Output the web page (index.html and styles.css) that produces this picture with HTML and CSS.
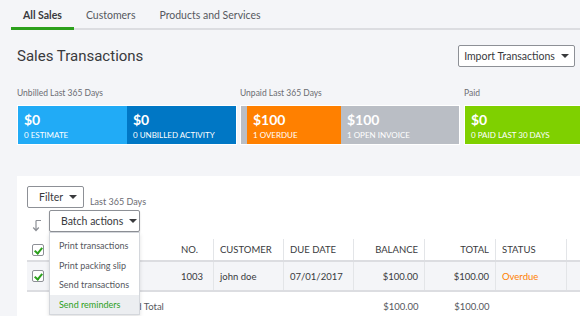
FILE: index.html
```html
<!DOCTYPE html>
<html lang="en">
<head>
    <meta charset="UTF-8">
    <title>Sales Transactions</title>
    <link rel="stylesheet" href="styles.css">
</head>
<body>
    <nav class="tabs">
        <a class="tab active">All Sales</a>
        <a class="tab">Customers</a>
        <a class="tab">Products and Services</a>
    </nav>

    <div class="page-head">
        <h1 class="page-title">Sales Transactions</h1>
        <button class="btn">Import Transactions <span class="caret"></span></button>
    </div>

    <div class="summary">
        <div class="group group-unbilled">
            <div class="group-label">Unbilled Last 365 Days</div>
            <div class="bars">
                <div class="bar bar-estimate"><b>$0</b><span>0 ESTIMATE</span></div>
                <div class="bar bar-unbilled"><b>$0</b><span>0 UNBILLED ACTIVITY</span></div>
            </div>
        </div>
        <div class="group group-unpaid">
            <div class="group-label">Unpaid Last 365 Days</div>
            <div class="bars">
                <div class="bar bar-stub"></div>
                <div class="bar bar-overdue"><b>$100</b><span>1 OVERDUE</span></div>
                <div class="bar bar-open"><b>$100</b><span>1 OPEN INVOICE</span></div>
            </div>
        </div>
        <div class="group group-paid">
            <div class="group-label">Paid</div>
            <div class="bars">
                <div class="bar bar-paid"><b>$0</b><span>0 PAID LAST 30 DAYS</span></div>
            </div>
        </div>
    </div>

    <div class="panel">
        <div class="filter-row">
            <button class="btn btn-small">Filter <span class="caret"></span></button>
            <span class="filter-note">Last 365 Days</span>
        </div>
        <div class="batch-row">
            <svg class="sort-icon" width="10" height="13" viewBox="0 0 10 13">
                <path d="M4 1.5 H9 M4 1.5 V11.5 M1.2 8.5 L4 11.5 L6.8 8.5" fill="none" stroke="#8d9096" stroke-width="1.2"/>
            </svg>
            <div class="batch">
                <button class="btn btn-batch">Batch actions <span class="caret"></span></button>
                <ul class="menu">
                    <li>Print transactions</li>
                    <li>Print packing slip</li>
                    <li>Send transactions</li>
                    <li class="hover">Send reminders</li>
                </ul>
            </div>
        </div>

        <table class="grid">
            <thead>
                <tr>
                    <th class="c-check"><span class="check"></span></th>
                    <th class="c-no">NO.</th>
                    <th class="c-cust">CUSTOMER</th>
                    <th class="c-date">DUE DATE</th>
                    <th class="c-num">BALANCE</th>
                    <th class="c-num">TOTAL</th>
                    <th class="c-status">STATUS</th>
                    <th class="c-more"></th>
                </tr>
            </thead>
            <tbody>
                <tr class="row">
                    <td class="c-check"><span class="check"></span></td>
                    <td>1003</td>
                    <td>john doe</td>
                    <td>07/01/2017</td>
                    <td class="c-num">$100.00</td>
                    <td class="c-num">$100.00</td>
                    <td class="overdue">Overdue</td>
                    <td></td>
                </tr>
                <tr class="total">
                    <td class="c-check total-label">Grand Total</td>
                    <td></td>
                    <td></td>
                    <td></td>
                    <td class="c-num">$100.00</td>
                    <td class="c-num">$100.00</td>
                    <td></td>
                    <td></td>
                </tr>
            </tbody>
        </table>
    </div>
</body>
</html>
```

FILE: styles.css
```css
body {
    margin: 0;
    width: 580px;
    height: 316px;
    overflow: hidden;
    background: #f4f5f8;
    font-family: Lato, "Noto Sans", sans-serif;
    color: #393a3d;
}
.tabs {
    display: flex;
    margin-left: 11px;
    height: 28px;
    border-bottom: 2px solid #dcdde1;
}
.tab {
    padding: 9px 12px 0 12px;
    font-size: 10.5px;
    color: #56585e;
}
.tab.active {
    color: #393a3d;
    font-weight: bold;
    border-bottom: 3px solid #2ca01c;
    margin-bottom: -2px;
}
.page-head {
    display: flex;
    justify-content: space-between;
    align-items: center;
    padding: 15px 5px 0 17px;
}
.page-title {
    margin: 0;
    font-size: 15px;
    font-weight: normal;
    font-family: Roboto, sans-serif;
}
.btn {
    font-family: inherit;
    font-size: 10.5px;
    color: #393a3d;
    background: #fff;
    border: 1px solid #8d9096;
    border-radius: 2px;
    height: 22px;
    padding: 0 12px;
    display: flex;
    align-items: center;
    gap: 6px;
    white-space: nowrap;
    box-sizing: border-box;
}
.page-head .btn {
    width: 117px;
    justify-content: center;
}
.caret {
    width: 0;
    height: 0;
    border-left: 4px solid transparent;
    border-right: 4px solid transparent;
    border-top: 4px solid #393a3d;
}
.summary {
    display: flex;
    margin: 21px 0 0 17px;
}
.group-label {
    font-size: 8.5px;
    color: #6b6c72;
    height: 17px;
}
.group-unbilled { width: 220px; margin-right: 3px; }
.group-unpaid { width: 220px; margin-right: 4px; }
.group-paid { flex: 1; }
.bars {
    display: flex;
    height: 38px;
    border: 1px solid #fff;
    border-right: none;
}
.bar {
    display: flex;
    flex-direction: column;
    padding: 6px 0 0 6px;
    color: #fff;
    box-sizing: border-box;
}
.bar b {
    font-size: 14px;
    line-height: 16px;
}
.bar span {
    font-size: 8px;
    margin-top: 2px;
}
.bar-estimate { width: 110px; background: #21abf6; }
.bar-unbilled { width: 110px; background: #0077c5; }
.bar-stub { width: 6px; padding: 0; background: #babec5; }
.bar-overdue { width: 94px; background: #ff8000; }
.bar-open { flex: 1; background: #babec5; }
.bar-paid { flex: 1; background: #7fd000; }
.group-unbilled .bars,
.group-unpaid .bars { border-right: 1px solid #fff; }

.panel {
    margin: 31px 0 0 17px;
    background: #fff;
    padding: 10px 0 0 10px;
    height: 200px;
}
.filter-row {
    display: flex;
    align-items: flex-end;
    gap: 6px;
}
.btn-small {
    width: 57px;
    padding: 0 11px;
}
.filter-note {
    font-size: 9px;
    color: #6b6c72;
    margin-bottom: 1px;
}
.batch-row {
    display: flex;
    align-items: center;
    margin-top: 2px;
    gap: 7px;
    padding-left: 5px;
}
.sort-icon {
    margin-top: 8px;
}
.batch {
    position: relative;
}
.btn-batch {
    width: 91px;
    padding: 0 11px;
    box-shadow: 0 1px 2px rgba(0,0,0,0.15);
}
.menu {
    position: absolute;
    top: 22px;
    left: 0;
    width: 91px;
    margin: 0;
    padding: 3px 0 0;
    list-style: none;
    background: #fff;
    border: 1px solid #d4d7dc;
    box-shadow: 0 2px 4px rgba(0,0,0,0.12);
    z-index: 2;
    box-sizing: border-box;
}
.menu li {
    font-size: 9px;
    color: #56585e;
    height: 19.5px;
    line-height: 19.5px;
    padding-left: 9px;
}
.menu li.hover {
    background: #eceef1;
    color: #2ca01c;
}
.grid {
    border-collapse: collapse;
    table-layout: fixed;
    width: 580px;
    margin-top: 7px;
    font-size: 9.5px;
}
.grid th,
.grid td {
    text-align: left;
    padding: 0 6px;
    border-right: 1px solid #e3e5e8;
    white-space: nowrap;
    overflow: hidden;
}
.grid th {
    height: 21px;
    font-weight: normal;
    border-bottom: 2px solid #dcdde1;
}
.grid .row td {
    height: 28px;
    background: #f4f5f8;
    border-bottom: 2px solid #dcdde1;
}
.grid .total td {
    height: 28px;
    border-right: none;
    color: #56585e;
}
.grid .c-check { width: 137px; padding-left: 5px; border-right: 1px solid #e3e5e8; }
.grid th.c-check { border-right: none; }
.grid .c-no { width: 26px; }
.grid .c-cust { width: 57px; }
.grid .c-date { width: 57px; }
.grid .c-num { width: 58px; text-align: right; }
.grid .c-status { width: 58px; }
.grid .c-more { width: 40px; }
.grid .row td.c-check { border-right: none; }
.grid .total td.total-label { padding-left: 89px; }
.check {
    display: inline-block;
    width: 10px;
    height: 10px;
    border: 1px solid #8d9096;
    border-radius: 2px;
    background: #fff;
    position: relative;
    vertical-align: middle;
}
.check::after {
    content: "";
    position: absolute;
    left: 3px;
    top: 1px;
    width: 3px;
    height: 6px;
    border-right: 2px solid #2ca01c;
    border-bottom: 2px solid #2ca01c;
    transform: rotate(40deg);
}
.overdue { color: #ff8000; }
```
